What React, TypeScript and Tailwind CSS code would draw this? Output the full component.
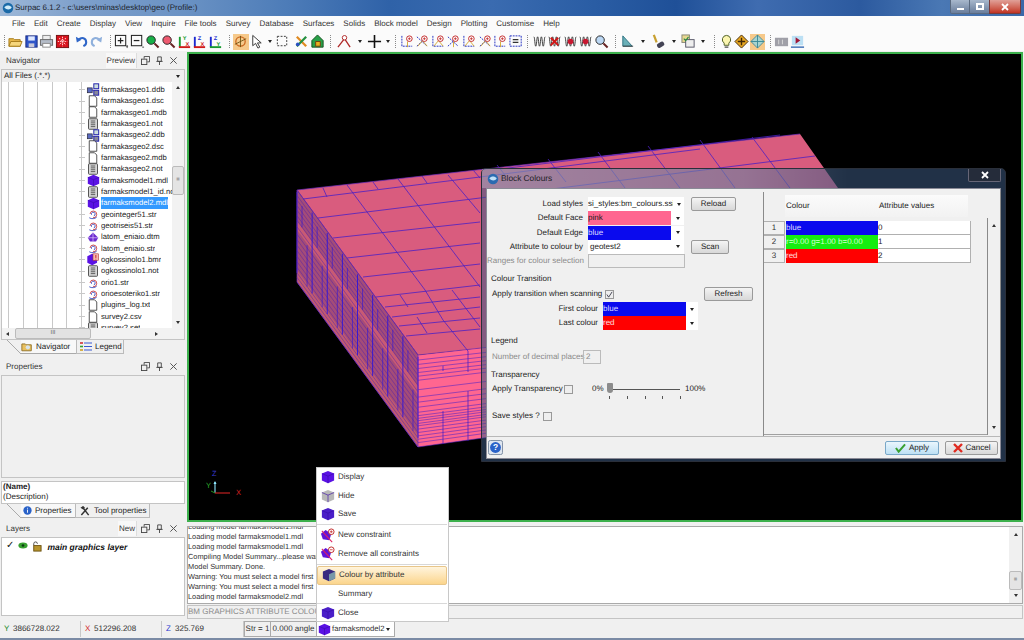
import type { ReactNode } from 'react';

const files: [string, string][] = [
    ['ddb', 'farmakasgeo1.ddb'],
    ['file', 'farmakasgeo1.dsc'],
    ['file', 'farmakasgeo1.mdb'],
    ['note', 'farmakasgeo1.not'],
    ['ddb', 'farmakasgeo2.ddb'],
    ['file', 'farmakasgeo2.dsc'],
    ['file', 'farmakasgeo2.mdb'],
    ['note', 'farmakasgeo2.not'],
    ['cube', 'farmaksmodel1.mdl'],
    ['note', 'farmaksmodel1_id.not'],
    ['cube', 'farmaksmodel2.mdl'],
    ['str', 'geointeger51.str'],
    ['str', 'geotriseis51.str'],
    ['dtm', 'latom_eniaio.dtm'],
    ['str', 'latom_eniaio.str'],
    ['bmr', 'ogkossinolo1.bmr'],
    ['note', 'ogkossinolo1.not'],
    ['str', 'orio1.str'],
    ['str', 'orioesoteriko1.str'],
    ['file', 'plugins_log.txt'],
    ['file', 'survey2.csv'],
    ['note', 'survey2.set'],
];

const menus = ['File', 'Edit', 'Create', 'Display', 'View', 'Inquire', 'File tools', 'Survey', 'Database', 'Surfaces', 'Solids', 'Block model', 'Design', 'Plotting', 'Customise', 'Help'];

const logLines = [
    'Loading model farmaksmodel1.mdl',
    'Loading model farmaksmodel1.mdl',
    'Loading model farmaksmodel1.mdl',
    'Compiling Model Summary...please wait',
    'Model Summary. Done.',
    'Warning: You must select a model first',
    'Warning: You must select a model first',
    'Loading model farmaksmodel2.mdl',
];

function Cube({ size = 13, color = '#5a12e4' }: { size?: number; color?: string }) {
    return (
        <svg width={size} height={size} viewBox="0 0 16 16">
            <polygon points="8,1 15,4 15,12 8,15 1,12 1,4" fill={color} />
            <path d="M1 4l7 3 7-3M8 7v8" stroke="#3a0aa8" strokeWidth="0.7" fill="none" />
        </svg>
    );
}

function FileIcon({ type }: { type: string }) {
    if (type === 'cube') return <Cube size={13} />;
    if (type === 'bmr') {
        return (
            <svg width="14" height="13" viewBox="0 0 16 16">
                <polygon points="7,1 13,4 13,12 7,15 1,12 1,4" fill="#5a12e4" />
                <rect x="8" y="1" width="7" height="8" fill="#f4b8b0" stroke="#a33" strokeWidth="0.7" />
                <path d="M11.5 2.5v3.5M11.5 7v1" stroke="#c22" strokeWidth="1.2" />
            </svg>
        );
    }
    if (type === 'file') {
        return (
            <svg width="12" height="12" viewBox="0 0 16 16">
                <path d="M3 1h7l3 3v11H3z" fill="#fff" stroke="#333" strokeWidth="1.1" />
            </svg>
        );
    }
    if (type === 'note') {
        return (
            <svg width="12" height="12" viewBox="0 0 16 16">
                <rect x="2" y="1" width="12" height="14" rx="1" fill="#d8d8d8" stroke="#444" strokeWidth="1.2" />
                <path d="M5 4h6M5 6.5h6M5 9h6M5 11.5h6" stroke="#333" strokeWidth="1" />
            </svg>
        );
    }
    if (type === 'ddb') {
        return (
            <svg width="14" height="13" viewBox="0 0 16 16">
                <rect x="1" y="6" width="6" height="6" fill="#5a6bc0" stroke="#223" strokeWidth="0.8" />
                <rect x="9" y="1" width="6" height="6" fill="#cdd" stroke="#22a" strokeWidth="1.2" />
                <rect x="9" y="9" width="6" height="6" fill="#889" stroke="#22a" strokeWidth="1.2" />
                <path d="M7 9h2" stroke="#22a" />
            </svg>
        );
    }
    if (type === 'dtm') {
        return (
            <svg width="12" height="12" viewBox="0 0 16 16">
                <polygon points="8,2 15,9 12,14 4,14 1,9" fill="#6a2bd0" />
                <path d="M8 2v12M1 9h14" stroke="#e4c8ff" strokeWidth="0.9" />
            </svg>
        );
    }
    return (
        <svg width="12" height="12" viewBox="0 0 16 16" fill="none">
            <path d="M4 8a4.5 4.5 0 1 1 4 5" stroke="#d04a4a" strokeWidth="1.3" />
            <path d="M6 9a2.5 2.5 0 1 1 3 1.5M3 13c3 2 8 1.5 10-1" stroke="#3b4ec0" strokeWidth="1.2" />
        </svg>
    );
}

function DockButtons() {
    return (
        <div className="flex items-center gap-[5px] text-[#555]">
            <svg width="9" height="9" viewBox="0 0 10 10" fill="none" stroke="#444">
                <rect x="0.5" y="3.5" width="6" height="6" />
                <path d="M3.5 3V0.5h6v6H7" />
            </svg>
            <svg width="9" height="9" viewBox="0 0 10 10" fill="none" stroke="#444">
                <path d="M3 1h4v5H3zM1.5 6h7M5 6v4" />
            </svg>
            <svg width="9" height="9" viewBox="0 0 10 10" fill="none" stroke="#555" strokeWidth="1.1">
                <path d="M1.5 1.5l7 7M8.5 1.5l-7 7" />
            </svg>
        </div>
    );
}

function Grip() {
    return <div className="mx-[2px] h-[13px] w-[2px] shrink-0 border-l border-dotted border-[#8a8a8a]" />;
}

function Tool({ children, on }: { children: ReactNode; on?: boolean }) {
    return <div className={`flex h-[16px] w-[15.6px] shrink-0 items-center justify-center ${on ? 'bg-[#f6c98a]' : ''}`}>{children}</div>;
}

function Drop({ narrow }: { narrow?: boolean }) {
    return (
        <div className={`flex shrink-0 justify-center ${narrow ? 'w-[11px]' : 'w-[14px]'}`}>
            <div className="h-0 w-0 border-x-[2.5px] border-t-[3px] border-x-transparent border-t-[#222]" />
        </div>
    );
}

function Ico({ children }: { children: ReactNode }) {
    return (
        <svg width="15" height="15" viewBox="0 0 16 16" fill="none">
            {children}
        </svg>
    );
}

const axisColours: Record<string, string> = { X: '#d01a1a', Y: '#189a30', Z: '#1a2ad0' };

function AxisIcon({ up, side }: { up: string; side: string }) {
    return (
        <Ico>
            <path d="M3 3v11" stroke={axisColours[up]} strokeWidth="2" />
            <path d="M2 14h12" stroke={axisColours[side]} strokeWidth="2" />
            <text x="6" y="6" fontSize="6" fontWeight="700" fill={axisColours[up]} fontFamily="Liberation Sans">
                {up}
            </text>
            <text x="9" y="12.5" fontSize="6" fontWeight="700" fill={axisColours[side]} fontFamily="Liberation Sans">
                {side}
            </text>
        </Ico>
    );
}

function Magnifier({ color }: { color: string }) {
    return (
        <Ico>
            <circle cx="6.5" cy="6.5" r="4.5" fill={color} stroke="#222" />
            <path d="M10 10l4.5 4.5" stroke="#622" strokeWidth="2.2" />
        </Ico>
    );
}

function SnapIcon({ variant = 0 }: { variant?: number }) {
    return (
        <Ico>
            <path d={variant % 2 ? 'M2 3l11 10M2 13L13 3' : 'M2 2v11h11'} stroke="#1c2ac0" strokeWidth="1" strokeDasharray="2 1" />
            <path d={variant % 3 ? 'M3 13l5-6 5 6' : 'M8 8v6'} stroke="#d0a020" strokeWidth="0.9" />
            <circle cx="10" cy="5" r="3" fill="#fff" stroke="#c02424" strokeWidth="1" />
            <path d="M8.5 5h3M10 3.5v3" stroke="#c02424" strokeWidth="0.8" />
        </Ico>
    );
}

function CoilIcon({ mark }: { mark?: string }) {
    return (
        <Ico>
            <path d="M2 3c1 0 1 10 2 10s1-10 2-10 1 10 2 10 1-10 2-10 1 10 2 10 1-10 2-10" stroke="#333" strokeWidth="1" />
            {mark === 'x' && <path d="M4 4l8 8M12 4l-8 8" stroke="#d01818" strokeWidth="2" />}
            {mark === 'dot' && <circle cx="8" cy="8" r="3" fill="#c81830" />}
        </Ico>
    );
}

function Toolbar() {
    return (
        <div className="flex h-[19px] items-center bg-[#fbfbfb] pl-[2px]">
            <Grip />
            <Tool>
                <Ico>
                    <path d="M1 5h5l1 1h6v7H1z" fill="#e8b84a" stroke="#a67c1c" />
                    <path d="M3 8h12l-2 5H1z" fill="#f6d67c" stroke="#a67c1c" />
                </Ico>
            </Tool>
            <Tool>
                <Ico>
                    <rect x="2" y="2" width="12" height="12" fill="#2f55c8" stroke="#1a2a80" />
                    <rect x="4.5" y="2.5" width="7" height="4.5" fill="#dfe8ff" />
                    <rect x="5" y="10" width="6" height="4" fill="#c8c8d8" />
                </Ico>
            </Tool>
            <Tool>
                <Ico>
                    <rect x="4" y="1.5" width="8" height="5" fill="#eee" stroke="#888" />
                    <rect x="1.5" y="6" width="13" height="6" fill="#b4bcc8" stroke="#666" />
                    <rect x="4" y="10" width="8" height="4" fill="#fff" stroke="#888" />
                </Ico>
            </Tool>
            <Tool>
                <Ico>
                    <rect x="1.5" y="1.5" width="13" height="13" fill="#d8121c" stroke="#701010" />
                    <path d="M8 3v10M3 8h10M4.5 4.5l7 7M11.5 4.5l-7 7" stroke="#ffd0d0" strokeWidth="1.1" strokeDasharray="1.4 1" />
                </Ico>
            </Tool>
            <div className="w-[3px] shrink-0" />
            <Tool>
                <Ico>
                    <path d="M5 6c3-3 8-2 8 3 0 2-1 3-3 4" stroke="#2f66c8" strokeWidth="2.2" />
                    <path d="M2 3l1 6 5-3z" fill="#2f66c8" />
                </Ico>
            </Tool>
            <Tool>
                <Ico>
                    <path d="M11 6c-3-3-8-2-8 3 0 2 1 3 3 4" stroke="#8fb0dc" strokeWidth="2.2" />
                    <path d="M14 3l-1 6-5-3z" fill="#8fb0dc" />
                </Ico>
            </Tool>
            <div className="w-[3.4px] shrink-0" />
            <Grip />
            <Tool>
                <Ico>
                    <rect x="1.5" y="1.5" width="11" height="11" stroke="#222" strokeWidth="1.1" />
                    <path d="M7 4v6M4 7h6" stroke="#222" strokeWidth="1.3" />
                    <path d="M13 13h2M14 12v3" stroke="#444" />
                </Ico>
            </Tool>
            <Tool>
                <Ico>
                    <rect x="1.5" y="1.5" width="11" height="11" stroke="#222" strokeWidth="1.1" />
                    <path d="M4 7h6" stroke="#222" strokeWidth="1.3" />
                    <path d="M13 14h2" stroke="#444" />
                </Ico>
            </Tool>
            <Tool>
                <Magnifier color="#18b048" />
            </Tool>
            <Tool>
                <Magnifier color="#ee5a70" />
            </Tool>
            <Tool>
                <AxisIcon up="Y" side="X" />
            </Tool>
            <Tool>
                <AxisIcon up="Z" side="X" />
            </Tool>
            <Tool>
                <AxisIcon up="Z" side="Y" />
            </Tool>
            <div className="w-[3.8px] shrink-0" />
            <Grip />
            <Tool on>
                <Ico>
                    <circle cx="8" cy="8" r="5" stroke="#c8641a" strokeWidth="1.3" />
                    <path d="M2 11L14 5M8 2v12" stroke="#6a5010" strokeWidth="0.9" />
                </Ico>
            </Tool>
            <Tool>
                <Ico>
                    <path d="M4 1.5v11l3-2.5 2.5 5 2-1-2.5-4.5h4z" fill="#fff" stroke="#333" />
                </Ico>
            </Tool>
            <Drop narrow />
            <Tool>
                <Ico>
                    <rect x="2.5" y="2.5" width="10" height="10" stroke="#333" strokeDasharray="2 1.5" />
                </Ico>
            </Tool>
            <div className="w-[3.4px] shrink-0" />
            <Tool>
                <Ico>
                    <path d="M3 3l10 10" stroke="#e08a20" strokeWidth="2.4" />
                    <path d="M13 3L3 13" stroke="#249040" strokeWidth="2.4" />
                    <circle cx="4" cy="11" r="2" fill="#2a50c0" />
                </Ico>
            </Tool>
            <Tool>
                <Ico>
                    <path d="M8 1l6 6v7H2V7z" fill="#28a048" stroke="#145020" />
                    <path d="M6 8h5v5H6z" fill="#e8b020" stroke="#704010" />
                </Ico>
            </Tool>
            <div className="w-[2.6px] shrink-0" />
            <Grip />
            <div className="w-[3.2px] shrink-0" />
            <Tool>
                <Ico>
                    <path d="M1 14L8 5l6 9" stroke="#b02828" strokeWidth="1.4" />
                    <circle cx="8" cy="4" r="2.4" stroke="#b02828" fill="#fff" />
                </Ico>
            </Tool>
            <Drop />
            <Tool>
                <Ico>
                    <path d="M8 1v14M1 8h14" stroke="#111" strokeWidth="1.7" />
                </Ico>
            </Tool>
            <Drop narrow />
            <Grip />
            {[0, 1, 2, 3, 4, 5, 6].map((v) => (
                <Tool key={v}>
                    <SnapIcon variant={v} />
                </Tool>
            ))}
            <Tool>
                <Ico>
                    <path d="M1 2h12v11H1z" stroke="#1c2ac0" strokeDasharray="2 1" />
                    <path d="M4 6h6M4 9h6" stroke="#333" strokeWidth="1.3" />
                </Ico>
            </Tool>
            <div className="w-[1.4px] shrink-0" />
            <Grip />
            <Tool>
                <CoilIcon />
            </Tool>
            <Tool>
                <CoilIcon mark="x" />
            </Tool>
            <Tool>
                <CoilIcon mark="dot" />
            </Tool>
            <Tool>
                <CoilIcon mark="dot" />
            </Tool>
            <Tool>
                <Magnifier color="#bcd8f4" />
            </Tool>
            <div className="w-[3.8px] shrink-0" />
            <Grip />
            <div className="w-px shrink-0" />
            <Tool>
                <Ico>
                    <path d="M3 2l10 11H3z" fill="#6ab0b8" stroke="#2a7080" />
                    <path d="M3 13h11" stroke="#444" />
                </Ico>
            </Tool>
            <Drop />
            <div className="w-[1.4px] shrink-0" />
            <Tool>
                <Ico>
                    <path d="M3 1l3 8" stroke="#c8a030" strokeWidth="2.4" />
                    <rect x="6" y="9" width="8" height="5" rx="2" transform="rotate(-30 10 11)" fill="#445" />
                </Ico>
            </Tool>
            <Drop />
            <Tool>
                <Ico>
                    <rect x="1" y="1" width="8" height="8" fill="#e8d890" stroke="#887" />
                    <rect x="5" y="6" width="9" height="8" fill="#eee" stroke="#556" />
                    <path d="M3 5l2 2 3-4" stroke="#2a8a40" strokeWidth="1.2" />
                </Ico>
            </Tool>
            <Drop />
            <div className="w-[2px] shrink-0" />
            <Grip />
            <Tool>
                <Ico>
                    <path d="M8 1.5a4.5 4.5 0 0 0-2.5 8.2V12h5V9.7A4.5 4.5 0 0 0 8 1.5z" fill="#fbf6b0" stroke="#4a5a20" />
                    <path d="M6 14h4" stroke="#444" strokeWidth="1.3" />
                </Ico>
            </Tool>
            <Tool>
                <Ico>
                    <polygon points="8,1 15,8 8,15 1,8" fill="#e8a820" stroke="#402808" />
                    <path d="M8 4v8M4 8h8" stroke="#402808" strokeWidth="1.5" />
                </Ico>
            </Tool>
            <Tool on>
                <Ico>
                    <polygon points="8,1 15,8 8,15 1,8" fill="#a8d4d0" stroke="#4a8a98" />
                    <path d="M8 1v14M1 8h14" stroke="#3a8a98" />
                </Ico>
            </Tool>
            <div className="w-[3px] shrink-0" />
            <Grip />
            <Tool>
                <Ico>
                    <rect x="1" y="4" width="14" height="9" fill="#a0a0a8" />
                    <path d="M5 6v5M9 6v5" stroke="#d8d8d8" />
                </Ico>
            </Tool>
            <Tool>
                <Ico>
                    <rect x="2" y="2" width="12" height="10" fill="#bce0f4" />
                    <path d="M6 3.5l5 3.5-5 3.5z" fill="#a01838" />
                    <path d="M1 14h14" stroke="#2a60b0" strokeWidth="1.4" />
                </Ico>
            </Tool>
        </div>
    );
}

function PanelHead({ title, extra }: { title: string; extra?: string }) {
    return (
        <div className="flex h-[17px] items-center pr-[7px] pl-[5px]">
            <span className="flex-1 text-[#333]">{title}</span>
            {extra && <span className="mr-[4px] flex h-[15px] items-center border-r border-[#ddd] bg-[#f8f8f8] px-[1px] text-[#333]">{extra}</span>}
            <DockButtons />
        </div>
    );
}

function Tree() {
    return (
        <div className="relative h-[257px] overflow-hidden border-x border-[#c4c4c4] bg-white">
            <div className="absolute inset-0 flex pl-[6px]">
                {[0, 1, 2, 3, 4].map((i) => (
                    <div key={i} className="mr-[13.5px] h-full w-px bg-[#c8c8c8]" />
                ))}
                <div className="h-full w-px bg-[#c8c8c8]" />
            </div>
            <div className="relative pt-[2px] pl-[77px] text-[7.7px]">
                {files.map(([type, name]) => {
                    const selected = name === 'farmaksmodel2.mdl';
                    return (
                        <div key={name} className="flex h-[11.35px] items-center">
                            <div className="h-px w-[6px] bg-[#c8c8c8]" />
                            <div className="flex w-[16px] justify-center">
                                <FileIcon type={type} />
                            </div>
                            <span className={`max-w-[72px] overflow-hidden ${selected ? 'bg-[#3399ff] text-white' : 'text-[#222]'}`}>{name}</span>
                        </div>
                    );
                })}
            </div>
            <div className="absolute top-0 right-0 flex h-[246px] w-[12px] flex-col items-center bg-[#f2f2f2] py-[4px]">
                <div className="h-0 w-0 border-x-[2.5px] border-b-[3px] border-x-transparent border-b-[#333]" />
                <div className="mt-[77px] flex h-[29px] w-[12px] items-center justify-center rounded-[2px] border border-[#bbb] bg-[#e4e4e4] text-[6px] text-[#777]">≡</div>
                <div className="mt-auto h-0 w-0 border-x-[2.5px] border-t-[3px] border-x-transparent border-t-[#333]" />
            </div>
            <div className="absolute right-0 bottom-0 left-0 flex h-[11px] items-center bg-[#f2f2f2] pr-[26px] pl-[4px]">
                <div className="h-0 w-0 border-y-[2.5px] border-r-[3px] border-y-transparent border-r-[#333]" />
                <div className="ml-[6px] flex h-[11px] w-[76px] items-center justify-center rounded-[2px] border border-[#bbb] bg-[#e2e2e2] text-[6px] text-[#666]">III</div>
                <div className="ml-auto h-0 w-0 border-y-[2.5px] border-l-[3px] border-y-transparent border-l-[#333]" />
            </div>
        </div>
    );
}

function BottomTabs({ first, firstIcon, second, secondIcon, firstW, secondW }: { first: string; firstIcon: ReactNode; second: string; secondIcon: ReactNode; firstW: string; secondW: string }) {
    return (
        <div className="flex h-[15px] border-t border-[#c4c4c4] pl-[6px]">
            <svg width="14" height="15" viewBox="0 0 14 15" className="shrink-0">
                <path d="M0 0l14 14" stroke="#aaa" fill="none" />
            </svg>
            <div className={`flex ${firstW} items-center gap-[3px] border-b border-[#aaa] bg-[#f8f8f8] text-[#222]`}>
                {firstIcon}
                {first}
            </div>
            <div className={`flex ${secondW} items-center gap-[3px] border-x border-b border-[#bbb] pl-[3px] text-[#222]`}>
                {secondIcon}
                {second}
            </div>
        </div>
    );
}

function Model() {
    const top: [number, number, number, number][] = [
        [303, 199, 480, 177],
        [480, 177, 700, 149],
        [318, 218, 480, 198],
        [480, 198, 815, 156],
        [333, 238, 480, 222],
        [347, 258, 480, 243],
        [363, 277, 480, 264],
        [376, 297, 480, 285],
        [385, 307, 480, 297],
        [392, 317, 480, 307],
        [399, 326, 480, 318],
        [406, 336, 480, 329],
        [323, 188, 327, 197],
        [347, 185, 425, 290],
        [425, 290, 443, 320],
        [443, 320, 468, 351],
        [373, 182, 378, 189],
        [398, 179, 480, 287],
        [422, 176, 427, 183],
        [448, 175, 480, 213],
        [473, 170, 480, 178],
        [400, 295, 408, 307],
        [452, 290, 480, 327],
        [417, 317, 427, 333],
        [497, 165, 505, 175],
        [548, 159, 566, 182],
        [598, 152, 625, 188],
        [648, 146, 680, 188],
        [700, 140, 735, 188],
        [752, 137, 790, 188],
        [500, 169, 780, 135],
    ];
    const rightRows = [0, 15, 28, 40, 52, 63, 75, 103, 125, 140, 155, 170, 180, 188, 195, 203, 210, 220, 230, 240, 250, 260, 273];
    const leftStrips = [0, 0.06, 0.11, 0.17, 0.22, 0.28, 0.33, 0.4, 0.48, 0.54, 0.6, 0.66, 0.72, 0.78, 0.84, 0.9, 0.95, 1];
    const leftColumns = Array.from({ length: 25 }, (_, i) => i / 24);
    const leftPoint = (u: number, v: number) => [297 + 121 * u, 190 + 165 * u + 92 * v];
    return (
        <svg viewBox="189 54 832 466" className="block h-full w-full">
            <polygon points="297,190 800,134 838,188 940,300 418,355" fill="#d95c7e" />
            <polygon points="297,190 418,355 418,447 297,282" fill="#a44c78" />
            <polygon points="297,221 418,386 418,395 297,230" fill="#c85a74" />
            <polygon points="297,270 418,435 418,447 297,282" fill="#c05a70" />
            <polygon points="418,355 490,347 490,437 418,447" fill="#ff6690" />
            {top.map(([a, b, c, d], i) => (
                <line key={i} x1={a} y1={b} x2={c} y2={d} stroke="#4a1fc4" strokeWidth="0.8" />
            ))}
            {leftStrips.map((v) => {
                const [a, b] = leftPoint(0, v);
                const [c, d] = leftPoint(1, v);
                return <line key={v} x1={a} y1={b} x2={c} y2={d} stroke="#4a1cb0" strokeWidth="0.45" />;
            })}
            {leftColumns.map((u, i) => {
                const [a, b] = leftPoint(u, i % 3 === 0 ? 0.02 : i % 3 === 1 ? 0.1 : 0.45);
                const [c, d] = leftPoint(u, i % 3 === 1 ? 0.33 : 0.9);
                return <line key={u} x1={a} y1={b} x2={c} y2={d} stroke="#2c14dc" strokeWidth={i % 3 === 0 ? 0.9 : 0.6} />;
            })}
            {rightRows.map((y) => (
                <line key={y} x1={418} y1={355 + (y / 273) * 92} x2={490} y2={347 + (y / 273) * 90} stroke="#4a1fc4" strokeWidth="0.55" />
            ))}
            <path d="M468 351v21M468 391v50M443 366v5M443 411v33" stroke="#3a18c8" strokeWidth="0.7" fill="none" />
            <path d="M297 190L800 134M297 190L418 355L418 447L297 282z" stroke="#6a2cc0" strokeWidth="0.7" fill="none" />
            <path d="M215 482v11" stroke="#8fe8ff" strokeWidth="1.1" fill="none" />
            <path d="M215 493h15" stroke="#c02020" strokeWidth="1.2" />
            <path d="M215 481l-1.5 3h3z" fill="#8fe8ff" />
            <path d="M215 493l-4-2" stroke="#209020" strokeWidth="1" />
            <text x="212" y="476" fontSize="7.5" fill="#3a3ad0" fontFamily="Liberation Sans">Z</text>
            <text x="206" y="488" fontSize="7.5" fill="#30b030" fontFamily="Liberation Sans">Y</text>
            <text x="236" y="495" fontSize="7.5" fill="#d02020" fontFamily="Liberation Sans">X</text>
        </svg>
    );
}

function Combo({ w, bg, text, color, listW }: { w: string; bg?: string; text: string; color?: string; listW: string }) {
    return (
        <div className={`flex h-[14px] ${w} items-stretch bg-white`}>
            <div className={`${listW} overflow-hidden ${bg ?? ''} ${color ?? 'text-[#222]'} leading-[14px]`}>{text}</div>
            <div className="flex flex-1 items-center justify-center">
                <div className="h-0 w-0 border-x-[2.5px] border-t-[3px] border-x-transparent border-t-[#222]" />
            </div>
        </div>
    );
}

function WinButton({ w, children }: { w: string; children: ReactNode }) {
    return <div className={`flex h-[14px] ${w} shrink-0 items-center justify-center rounded-[2px] border border-[#9a9a9a] bg-gradient-to-b from-[#f4f4f4] to-[#d8d8d8] text-[#222]`}>{children}</div>;
}

function Check() {
    return <div className="h-[9px] w-[9px] shrink-0 border border-[#999] bg-[#eee]" />;
}

function Heading({ children, className }: { children: ReactNode; className: string }) {
    return <div className={`h-[12px] pl-[4px] leading-[12px] text-[#222] ${className}`}>{children}</div>;
}

function Label({ w, muted, children }: { w: string; muted?: boolean; children: ReactNode }) {
    return <div className={`${w} shrink-0 pr-[5px] text-right ${muted ? 'text-[#8a8a8a]' : 'text-[#222]'}`}>{children}</div>;
}

function BlockColours() {
    return (
        <div className="absolute top-[168px] left-[481px] flex h-[294px] w-[525px] flex-col rounded-t-[5px] border border-[#2a2f3a] bg-[#3c5a82]/55 pr-[4px] pb-[2px] pl-[4px]">
            <div className="-mx-[4px] flex h-[19px] shrink-0 items-center bg-gradient-to-r from-white/25 via-white/15 to-transparent to-70% px-[4px]">
                <svg width="12" height="12" viewBox="0 0 16 16" className="ml-[1px]">
                    <circle cx="8" cy="8" r="7" fill="#2a6ab0" />
                    <path d="M3 7c3-3 7-3 10 0-2 4-7 4-10 0z" fill="#bfe0f8" />
                </svg>
                <span className="ml-[2px] flex-1 text-[8.3px] text-[#1c1c24]">Block Colours</span>
                <div className="mb-[6px] flex h-[13px] w-[33px] items-center justify-center rounded-b-[2px] border border-t-0 border-[#667] bg-[#252c3a]">
                    <svg width="8" height="8" viewBox="0 0 8 8">
                        <path d="M1 1l6 6M7 1L1 7" stroke="#fff" strokeWidth="1.8" />
                    </svg>
                </div>
            </div>
            <div className="flex min-h-0 flex-1 flex-col border border-[#8a8a96] bg-[#f0f0f0]">
                <div className="flex h-[248px] border-b border-[#b8b8b8]">
                    <div className="w-[276px] shrink-0 pt-[8px]">
                        <div className="flex h-[14.25px] items-center">
                            <Label w="w-[101px]">Load styles</Label>
                            <Combo w="w-[96px]" text="si_styles:bm_colours.ssi" listW="w-[85px]" />
                            <div className="ml-[7px]">
                                <WinButton w="w-[45px]">Reload</WinButton>
                            </div>
                        </div>
                        <div className="flex h-[14.25px] items-center">
                            <Label w="w-[101px]">Default Face</Label>
                            <Combo w="w-[96px]" text="pink" bg="bg-[#ff6690]" listW="w-[83px]" />
                        </div>
                        <div className="flex h-[14.25px] items-center">
                            <Label w="w-[101px]">Default Edge</Label>
                            <Combo w="w-[96px]" text="blue" bg="bg-[#0a0aee]" color="text-[#dcdcff]" listW="w-[83px]" />
                        </div>
                        <div className="flex h-[14.25px] items-center">
                            <Label w="w-[101px]">Attribute to colour by</Label>
                            <Combo w="w-[96px]" text="geotest2" listW="w-[83px] pl-[2px]" />
                            <div className="ml-[7px]">
                                <WinButton w="w-[38px]">Scan</WinButton>
                            </div>
                        </div>
                        <div className="flex h-[14.25px] items-center">
                            <Label w="w-[101px]" muted>
                                Ranges for colour selection
                            </Label>
                            <div className="h-[14px] w-[97px] border border-[#bbb]" />
                        </div>
                        <Heading className="mt-[5px]">Colour Transition</Heading>
                        <div className="mt-[2px] flex h-[14px] items-center pl-[5px]">
                            <span className="w-[113px] text-[#222]">Apply transition when scanning</span>
                            <div className="flex h-[9px] w-[9px] items-center justify-center border border-[#999] bg-[#eee]">
                                <svg width="7" height="7" viewBox="0 0 8 8">
                                    <path d="M1 4l2 3 4-6" stroke="#334" strokeWidth="1" fill="none" />
                                </svg>
                            </div>
                            <div className="ml-[90px]">
                                <WinButton w="w-[49px]">Refresh</WinButton>
                            </div>
                        </div>
                        <div className="mt-px flex h-[14px] items-center">
                            <Label w="w-[116px]">First colour</Label>
                            <Combo w="w-[95px]" text="blue" bg="bg-[#0a0aee]" color="text-[#dcdcff]" listW="w-[83px]" />
                        </div>
                        <div className="flex h-[14px] items-center">
                            <Label w="w-[116px]">Last colour</Label>
                            <Combo w="w-[95px]" text="red" bg="bg-[#ff0000]" color="text-[#ffe0e0]" listW="w-[83px]" />
                        </div>
                        <Heading className="mt-[5px]">Legend</Heading>
                        <div className="mt-[3px] flex h-[14px] items-center pl-[5px]">
                            <span className="w-[91px] text-[#8a8a8a]">Number of decimal places</span>
                            <div className="h-[14px] w-[18px] border border-[#bbb] pl-[2px] leading-[12px] text-[#8a8a8a]">2</div>
                        </div>
                        <Heading className="mt-[5px]">Transparency</Heading>
                        <div className="mt-px flex h-[14px] items-center pl-[5px]">
                            <span className="w-[72px] text-[#222]">Apply Transparency</span>
                            <Check />
                            <span className="ml-[19px] w-[15px] text-[#222]">0%</span>
                            <div className="relative flex h-[14px] w-[76px] items-center">
                                <div className="ml-[3px] h-px w-[70px] bg-[#555]" />
                                <div className="absolute top-px left-0 h-[10px] w-[6px] rounded-t-[1px] rounded-b-[3px] bg-[#8c8c8c]" />
                                <div className="absolute -bottom-[3px] left-[2px] flex w-[72px] justify-between">
                                    {[0, 1, 2, 3, 4].map((tick) => (
                                        <div key={tick} className="h-[3px] w-px bg-[#555]" />
                                    ))}
                                </div>
                            </div>
                            <span className="ml-[2px] text-[#222]">100%</span>
                        </div>
                        <div className="mt-[13px] flex h-[14px] items-center pl-[5px]">
                            <span className="w-[51px] text-[#222]">Save styles ?</span>
                            <Check />
                        </div>
                    </div>
                    <div className="mt-[3px] flex w-[238px] shrink-0 border-x border-[#8a8a8a]">
                        <div className="flex min-w-0 flex-1 flex-col pt-[3px]">
                            <div className="ml-[21px] flex h-[22px] w-[183px] items-center bg-gradient-to-b from-[#fbfbfb] to-[#f2f2f2] pl-px text-[#222]">
                                <span className="w-[93px]">Colour</span>
                                <span>Attribute values</span>
                            </div>
                            <div className="mt-[4px] mb-px flex-1 border-b border-[#a0a0a0]">
                                {[
                                    ['1', 'blue', 'bg-[#0a0aee]', 'text-[#dcdcff]', '0'],
                                    ['2', 'r=0.00 g=1.00 b=0.00', 'bg-[#16ee10]', 'text-[#d0ffd0]', '1'],
                                    ['3', 'red', 'bg-[#ff0000]', 'text-[#ffe0e0]', '2'],
                                ].map(([n, name, bg, fg, val]) => (
                                    <div key={n} className="flex h-[14px]">
                                        <div className="flex w-[21px] items-center justify-center border-y border-r border-[#b0b0b0] text-[#333]">{n}</div>
                                        <div className={`ml-px w-[92px] overflow-hidden ${bg} ${fg} leading-[14px]`}>{name}</div>
                                        <div className="w-[93px] border-r border-b border-[#b0b0b0] bg-white leading-[13px] text-[#222]">{val}</div>
                                    </div>
                                ))}
                            </div>
                        </div>
                        <div className="mt-[26px] mb-px flex w-[13px] flex-col items-center justify-between border-l border-[#8a8a8a] py-[6px]">
                            <div className="h-0 w-0 border-x-[2.5px] border-b-[3px] border-x-transparent border-b-[#333]" />
                            <div className="h-0 w-0 border-x-[2.5px] border-t-[3px] border-x-transparent border-t-[#333]" />
                        </div>
                    </div>
                </div>
                <div className="flex min-h-0 flex-1 items-center pr-[2px] pl-[1px]">
                    <svg width="15" height="15" viewBox="0 0 16 16">
                        <rect x="0.5" y="0.5" width="15" height="15" rx="2" fill="#dfe6f0" stroke="#7a8aa0" />
                        <circle cx="8" cy="8" r="5.8" fill="#2a62c8" />
                        <text x="8" y="11" textAnchor="middle" fontSize="9" fontWeight="700" fill="#fff" fontFamily="Liberation Sans">?</text>
                    </svg>
                    <div className="ml-auto flex gap-[6px]">
                        <div className="flex h-[14px] w-[54px] items-center justify-center gap-[3px] rounded-[2px] border border-[#7aa8c8] bg-gradient-to-b from-[#eaf6fd] to-[#bee0f4] text-[#222]">
                            <svg width="11" height="10" viewBox="0 0 12 10">
                                <path d="M1 5l3 4 7-8" stroke="#38a030" strokeWidth="2.2" fill="none" />
                            </svg>
                            Apply
                        </div>
                        <div className="flex h-[14px] w-[53px] items-center justify-center gap-[3px] rounded-[2px] border border-[#9a9a9a] bg-gradient-to-b from-[#f4f4f4] to-[#d8d8d8] text-[#222]">
                            <svg width="10" height="10" viewBox="0 0 10 10">
                                <path d="M1 1l8 8M9 1L1 9" stroke="#e02a20" strokeWidth="2.4" />
                            </svg>
                            Cancel
                        </div>
                    </div>
                </div>
            </div>
        </div>
    );
}

function MenuRow({ icon, label, h, on }: { icon?: ReactNode; label: string; h: string; on?: boolean }) {
    return (
        <div className={`flex ${h} shrink-0 items-center ${on ? 'rounded-[2px] border border-[#e8c68a] bg-gradient-to-b from-[#fff4dc] to-[#fbd58c]' : ''}`}>
            <div className="flex w-[21px] shrink-0 justify-center">{icon}</div>
            <span className="text-[#333]">{label}</span>
        </div>
    );
}

function ContextMenu() {
    return (
        <div className="absolute top-[467px] left-[316px] flex h-[155px] w-[133px] flex-col border border-[#c8c8c8] bg-white pr-px">
            <MenuRow h="h-[18.5px]" icon={<Cube size={14} />} label="Display" />
            <MenuRow h="h-[18.5px]" icon={<Cube size={14} color="#b8b8b8" />} label="Hide" />
            <MenuRow h="h-[18.5px]" icon={<Cube size={14} color="#4a1ec8" />} label="Save" />
            <div className="my-[0.75px] border-t border-[#d8d8d8]" />
            <MenuRow
                h="h-[18.5px]"
                icon={
                    <svg width="15" height="15" viewBox="0 0 16 16">
                        <polygon points="6,2 12,6 10,13 3,12 1,6" fill="#6014d8" />
                        <path d="M2 3l11 12" stroke="#e02060" strokeWidth="1.1" />
                        <circle cx="12" cy="4" r="3" fill="#fff" stroke="#c02424" />
                        <path d="M10.5 4h3M12 2.5v3" stroke="#c02424" strokeWidth="0.8" />
                    </svg>
                }
                label="New constraint"
            />
            <MenuRow
                h="h-[18.5px]"
                icon={
                    <svg width="15" height="15" viewBox="0 0 16 16">
                        <polygon points="6,2 12,6 10,13 3,12 1,6" fill="#6014d8" />
                        <path d="M2 3l11 12" stroke="#e02060" strokeWidth="1.1" />
                        <circle cx="12" cy="4" r="3" fill="#fff" stroke="#c02424" />
                        <path d="M10.5 4h3" stroke="#c02424" strokeWidth="0.8" />
                    </svg>
                }
                label="Remove all constraints"
            />
            <div className="my-[0.75px] border-t border-[#d8d8d8]" />
            <MenuRow
                h="h-[19px]"
                on
                icon={
                    <svg width="14" height="14" viewBox="0 0 16 16">
                        <polygon points="8,1 15,4 15,12 8,15 1,12 1,4" fill="#3a2a80" />
                        <polygon points="8,7 15,4 15,12 8,15" fill="#7898a8" />
                    </svg>
                }
                label="Colour by attribute"
            />
            <MenuRow h="h-[18px]" label="Summary" />
            <div className="border-t border-[#d8d8d8]" />
            <MenuRow h="h-[18.5px]" icon={<Cube size={14} color="#4a1ec8" />} label="Close" />
        </div>
    );
}

function StatusField({ letter, color, value, w }: { letter: string; color: string; value: string; w: string }) {
    return (
        <div className={`flex ${w} items-center border-r border-[#c8c8c8] pl-[4px] text-[#333]`}>
            <span className={`w-[9px] ${color}`}>{letter}</span>
            {value}
        </div>
    );
}

export default function App() {
    return (
        <div className="relative h-[640px] w-[1024px] overflow-hidden bg-[#f0f0f0] font-['Liberation_Sans',Arial,sans-serif] text-[8px] whitespace-nowrap [text-rendering:geometricPrecision]">
            <div className="flex h-[16px] items-center bg-[linear-gradient(90deg,#9db8d8_0%,#7d9fcb_8%,#6a92c4_18%,#4d7cb8_28%,#2f62a8_38%,#3a6bb0_48%,#2a5da4_58%,#1f5098_66%,#3f6cb0_74%,#2c5a9f_84%,#4a78b4_92%,#3a68a8_100%)]">
                <svg width="12" height="12" viewBox="0 0 16 16" className="ml-[2px]">
                    <circle cx="8" cy="8" r="7" fill="#1a6aa8" />
                    <path d="M3 7c3-3 7-3 10 0-2 4-7 4-10 0z" fill="#d0ecfa" />
                </svg>
                <span className="ml-px flex-1 text-[#20242c]">Surpac 6.1.2 - c:\users\minas\desktop\geo (Profile:)</span>
                <div className="mr-[3px] flex h-[14px] self-start">
                    <div className="flex w-[20px] items-center justify-center rounded-bl-[2px] border border-t-0 border-[#5a6a80] bg-gradient-to-b from-[#a8b8cc] to-[#6a7e9c]">
                        <div className="mt-[4px] h-[2px] w-[7px] bg-white" />
                    </div>
                    <div className="flex w-[19px] items-center justify-center border-b border-[#5a6a80] bg-gradient-to-b from-[#a8b8cc] to-[#6a7e9c]">
                        <div className="h-[7px] w-[8px] border-2 border-white" />
                    </div>
                    <div className="flex w-[32px] items-center justify-center rounded-br-[2px] border border-t-0 border-[#7a3a3a] bg-gradient-to-b from-[#e0a098] to-[#c03020]">
                        <svg width="8" height="8" viewBox="0 0 8 8">
                            <path d="M1 1l6 6M7 1L1 7" stroke="#fff" strokeWidth="1.8" />
                        </svg>
                    </div>
                </div>
            </div>

            <div className="flex h-[16px] items-center gap-[9px] bg-[#fbfbfb] pl-[12px] text-[#333]">
                {menus.map((menu) => (
                    <span key={menu}>{menu}</span>
                ))}
            </div>

            <Toolbar />

            <div className="mt-px grid h-[566px] grid-cols-[187px_1fr]">
                <div className="flex flex-col pl-px">
                    <div className="h-[305px] w-[184px]">
                        <PanelHead title="Navigator" extra="Preview" />
                        <div className="flex h-[13px] items-center justify-between border-x border-t border-[#c4c4c4] bg-[#efefef] pr-[4px] pl-[2px] text-[#222]">
                            <span>All Files (.*.*)</span>
                            <div className="h-0 w-0 border-x-[2.5px] border-t-[3px] border-x-transparent border-t-[#222]" />
                        </div>
                        <Tree />
                        <BottomTabs
                            first="Navigator"
                            firstW="w-[55px]"
                            firstIcon={
                                <svg width="12" height="11" viewBox="0 0 14 12">
                                    <path d="M1 3h4l1 1h6v7H1z" fill="#e8c060" stroke="#8a6a20" />
                                    <circle cx="8" cy="7" r="2.5" fill="#d8e4ec" />
                                </svg>
                            }
                            second="Legend"
                            secondW="w-[48px]"
                            secondIcon={
                                <svg width="12" height="11" viewBox="0 0 12 11">
                                    <path d="M0 2h3" stroke="#d03030" strokeWidth="1.6" />
                                    <path d="M0 5.5h3" stroke="#30a030" strokeWidth="1.6" />
                                    <path d="M0 9h3" stroke="#d0a020" strokeWidth="1.6" />
                                    <path d="M4 2h8M4 5.5h8M4 9h8" stroke="#3a5ad0" strokeWidth="1" />
                                </svg>
                            }
                        />
                    </div>
                    <div className="mt-px h-[160px] w-[184px]">
                        <PanelHead title="Properties" />
                        <div className="h-[103px] border border-[#c4c4c4] bg-[#f0f0f0]" />
                        <div className="mt-[3px] h-[22px] border-x border-t border-[#c4c4c4] bg-white pl-px leading-[10px] text-[#222]">
                            <div className="font-bold">(Name)</div>
                            <div>(Description)</div>
                        </div>
                        <BottomTabs
                            first="Properties"
                            firstW="w-[54px]"
                            firstIcon={
                                <svg width="9" height="9" viewBox="0 0 10 10" className="ml-[2px]">
                                    <circle cx="5" cy="5" r="4.6" fill="#2a62c8" />
                                    <path d="M5 4v3.5M5 2v1" stroke="#fff" />
                                </svg>
                            }
                            second="Tool properties"
                            secondW="w-[75px]"
                            secondIcon={
                                <svg width="12" height="11" viewBox="0 0 12 12">
                                    <path d="M2 11L9 3M3 2l7 9" stroke="#333" strokeWidth="1.6" />
                                    <path d="M1 3l3-2 2 2-2 2z" fill="#333" />
                                </svg>
                            }
                        />
                    </div>
                    <div className="mt-[2px] w-[184px]">
                        <PanelHead title="Layers" extra="New" />
                        <div className="flex h-[79px] items-start border border-[#c4c4c4] bg-white pt-[3px] pl-[4px]">
                            <span className="mr-[4px] text-[10px] leading-[10px] text-[#111]">✓</span>
                            <svg width="10" height="9" viewBox="0 0 12 10" className="mr-[3px]">
                                <ellipse cx="6" cy="5" rx="5.5" ry="3.5" fill="#38a030" />
                                <circle cx="6" cy="5" r="1.6" fill="#0a3a10" />
                            </svg>
                            <svg width="11" height="11" viewBox="0 0 12 12">
                                <path d="M3 5V3a2 2 0 0 1 4 0" stroke="#444" fill="none" />
                                <rect x="3" y="5" width="8" height="6" fill="#b8942c" stroke="#6a5010" />
                            </svg>
                            <span className="ml-[5px] text-[8.5px] font-bold text-[#111] italic">main graphics layer</span>
                        </div>
                    </div>
                </div>

                <div className="flex flex-col pr-px">
                    <div className="h-[470px] border-2 border-[#3cb04c] bg-black">
                        <Model />
                    </div>
                    <div className="mt-[4px] flex h-[78px] border border-[#aaa] bg-white">
                        <div className="flex-1 overflow-hidden text-[7.4px] leading-[10px] text-[#333]">
                            <div className="-mt-[5px]">
                                {logLines.map((line, i) => (
                                    <div key={i}>{line}</div>
                                ))}
                            </div>
                        </div>
                        <div className="flex w-[13px] flex-col items-center justify-between bg-[#f0f0f0] py-[6px]">
                            <div className="h-0 w-0 border-x-[2.5px] border-b-[3px] border-x-transparent border-b-[#333]" />
                            <div className="mt-auto mb-[4px] flex h-[19px] w-[13px] items-center justify-center rounded-[2px] border border-[#bbb] bg-[#e4e4e4] text-[6px] text-[#777]">≡</div>
                            <div className="h-0 w-0 border-x-[2.5px] border-t-[3px] border-x-transparent border-t-[#333]" />
                        </div>
                    </div>
                    <div className="mt-px flex h-[14px] items-center border border-[#c4c4c4] text-[#8a8a8a]">BM GRAPHICS ATTRIBUTE COLOUR (</div>
                </div>
            </div>

            <div className="mt-[2px] flex h-[18px] items-stretch py-px">
                <StatusField letter="Y" color="text-[#1c8a2e]" value="3866728.022" w="w-[81px]" />
                <StatusField letter="X" color="text-[#d02020]" value="512296.208" w="w-[81px]" />
                <StatusField letter="Z" color="text-[#2a3ad0]" value="325.769" w="w-[82px]" />
                <div className="flex w-[27px] items-center justify-center border border-[#aaa] text-[#333]">Str = 1</div>
                <div className="flex w-[45px] items-center justify-center border-y border-[#aaa] text-[#333]">0.000 angle</div>
                <div className="flex w-[79px] items-center border border-[#aaa] bg-white pl-px text-[#333]">
                    <Cube size={13} />
                    <span className="ml-px text-[7.7px]">farmaksmodel2</span>
                    <div className="mr-[4px] ml-auto h-0 w-0 border-x-[2.5px] border-t-[3px] border-x-transparent border-t-[#222]" />
                </div>
            </div>
            <div className="h-[2px] bg-[#7b8ba5]" />

            <BlockColours />
            <ContextMenu />
        </div>
    );
}
